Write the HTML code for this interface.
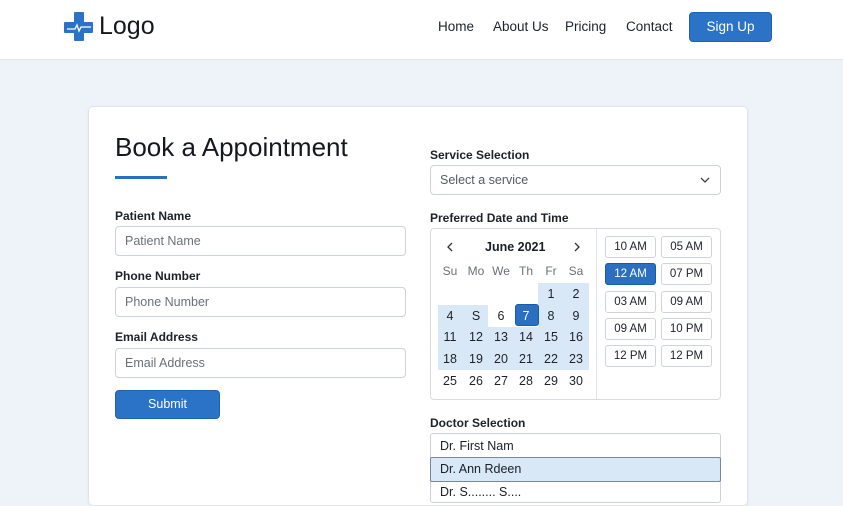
<!DOCTYPE html>
<html><head><style>
*{margin:0;padding:0;box-sizing:border-box}
body{width:843px;height:491px;overflow:hidden;background:#eef3f9;font-family:"Liberation Sans",Arial,sans-serif;color:#1a1f27;position:relative}
.a{position:absolute}
.hdr{left:0;top:0;width:843px;height:60px;background:#fff;border-bottom:1px solid #e2e6ec}
.nav{top:19px;font-size:13.5px;color:#1d2129}
.btn{background:#2a73c7;color:#fff;border-radius:4px;text-align:center;border:1px solid #1f62b0}
.card{left:88px;top:106px;width:660px;height:400px;background:#fff;border:1px solid #e0e4ea;border-radius:5px;box-shadow:0 1px 3px rgba(0,0,0,.05)}
.lbl{font-size:12px;font-weight:bold;color:#1d2129}
.inp{border:1px solid #cdd2d9;border-radius:4px;background:#fff;font-size:12.5px;color:#6b7078;padding-left:9px;display:flex;align-items:center}
.c{position:absolute;width:24px;text-align:center;font-size:12.5px;color:#1d2129}
.h{color:#6b7078;font-size:12px}
.t{position:absolute;width:51px;height:22px;border:1px solid #cfd4da;border-radius:3px;font-size:11.5px;text-align:center;line-height:20px;color:#1d2129;background:#fff}
.hl{position:absolute;background:#d8e8f6}
</style></head><body>
<div class="a hdr"></div>
<div class="a" style="left:74px;top:12px;width:10px;height:29px;background:#2a73c7;border-radius:1px"></div>
<div class="a" style="left:64px;top:22px;width:29px;height:11px;background:#2a73c7;border-radius:1px"></div>
<svg class="a" style="left:64px;top:20px" width="30" height="14"><path d="M3 9 H11 L13 5 L15 11 L17 7 H27" stroke="#fff" stroke-width="1.3" fill="none"/></svg>
<div class="a" style="left:99px;top:12px;font-size:25px;color:#15181d">Logo</div>
<div class="a nav" style="left:438px">Home</div>
<div class="a nav" style="left:493px">About Us</div>
<div class="a nav" style="left:565px">Pricing</div>
<div class="a nav" style="left:626px">Contact</div>
<div class="a btn" style="left:689px;top:12px;width:83px;height:30px;line-height:28px;font-size:13.5px">Sign Up</div>

<div class="a card"></div>
<div class="a" style="left:115px;top:132px;font-size:26px;color:#15181d">Book a Appointment</div>
<div class="a" style="left:115px;top:176px;width:52px;height:3px;background:#2a6fc0"></div>

<div class="a lbl" style="left:115px;top:209px">Patient Name</div>
<div class="a inp" style="left:115px;top:226px;width:291px;height:30px">Patient Name</div>
<div class="a lbl" style="left:115px;top:269px">Phone Number</div>
<div class="a inp" style="left:115px;top:287px;width:291px;height:30px">Phone Number</div>
<div class="a lbl" style="left:115px;top:330px">Email Address</div>
<div class="a inp" style="left:115px;top:348px;width:291px;height:30px">Email Address</div>
<div class="a btn" style="left:115px;top:390px;width:105px;height:29px;line-height:27px;font-size:12.5px">Submit</div>

<div class="a lbl" style="left:430px;top:148px">Service Selection</div>
<div class="a inp" style="left:430px;top:165px;width:291px;height:30px;color:#555a62">Select a service</div>
<svg class="a" style="left:699px;top:176px" width="12" height="8"><path d="M2 2 L6 6 L10 2" stroke="#444" stroke-width="1.3" fill="none"/></svg>

<div class="a lbl" style="left:430px;top:211px">Preferred Date and Time</div>
<div class="a" style="left:430px;top:228px;width:291px;height:172px;border:1px solid #d8dce2;border-radius:4px;background:#fff"></div>
<div class="a" style="left:596px;top:229px;width:1px;height:170px;background:#e0e4ea"></div>
<svg class="a" style="left:445px;top:242px" width="10" height="10"><path d="M7 1 L3 5 L7 9" stroke="#333" stroke-width="1.3" fill="none"/></svg>
<svg class="a" style="left:572px;top:242px" width="10" height="10"><path d="M3 1 L7 5 L3 9" stroke="#333" stroke-width="1.3" fill="none"/></svg>
<div class="a" style="left:485px;top:240px;font-size:12.5px;font-weight:bold">June 2021</div>
<div class="hl" style="left:538px;top:283px;width:51px;height:22px"></div>
<div class="hl" style="left:438px;top:305px;width:50px;height:22px"></div>
<div class="hl" style="left:538px;top:305px;width:51px;height:22px"></div>
<div class="hl" style="left:438px;top:327px;width:151px;height:43px"></div>
<div class="a" style="left:515px;top:304px;width:24px;height:22px;background:#2a6fc0;border-radius:3px;border:1px solid #1d5aa5"></div>
<div id="cal"></div>
<script>
var xs=[438,464,489,514,539,564],out='';
var hd=['Su','Mo','We','Th','Fr','Sa'];
hd.forEach((d,i)=>out+='<div class="c h" style="left:'+xs[i]+'px;top:264px">'+d+'</div>');
var rows=[['','','','','1','2'],['4','S','6','7','8','9'],['11','12','13','14','15','16'],['18','19','20','21','22','23'],['25','26','27','28','29','30']];
var ys=[287,309,330,352,374];
rows.forEach((r,j)=>r.forEach((d,i)=>{if(d)out+='<div class="c" style="left:'+xs[i]+'px;top:'+ys[j]+'px;'+(d=='7'?'color:#fff':'')+'">'+d+'</div>'}));
var ts=[['10 AM','05 AM'],['12 AM','07 PM'],['03 AM','09 AM'],['09 AM','10 PM'],['12 PM','12 PM']];
ts.forEach((r,j)=>r.forEach((t,i)=>{var s=(j==1&&i==0)?'background:#2a6fc0;color:#fff;border-color:#1d5aa5':'';out+='<div class="t" style="left:'+(605+i*56)+'px;top:'+(236+j*27.3)+'px;'+s+'">'+t+'</div>'}));
document.getElementById('cal').innerHTML=out;
</script>

<div class="a lbl" style="left:430px;top:416px">Doctor Selection</div>
<div class="a" style="left:430px;top:433px;width:291px;height:70px;border:1px solid #cdd2d9;border-radius:3px;background:#fff"></div>
<div class="a" style="left:440px;top:439px;font-size:12.5px">Dr. First Nam</div>
<div class="a" style="left:430px;top:457px;width:291px;height:25px;background:#d8e8f6;border:1px solid #7a8798;border-radius:2px"></div>
<div class="a" style="left:440px;top:462px;font-size:12.5px">Dr. Ann Rdeen</div>
<div class="a" style="left:440px;top:485px;font-size:12.5px">Dr. S........ S....</div>
</body></html>
